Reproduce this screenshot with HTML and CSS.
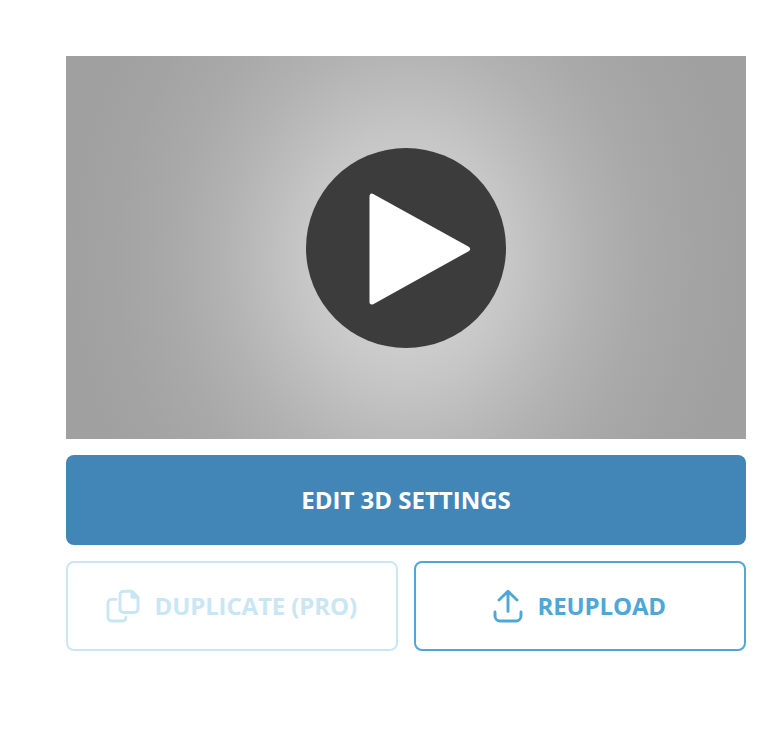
FILE: index.html
```html
<!DOCTYPE html>
<html lang="en">
<head>
<meta charset="utf-8">
<title>3D model</title>
<link rel="stylesheet" href="styles.css">
</head>
<body>
<main class="panel">
  <div class="preview">
    <button class="play" aria-label="Play">
      <svg width="200" height="200" viewBox="0 0 200 200"><path d="M66 48.200v105.800L161.500 101Z" fill="#fff" stroke="#fff" stroke-width="5" stroke-linejoin="round"/></svg>
    </button>
  </div>
  <button class="btn primary"><span>EDIT 3D SETTINGS</span></button>
  <div class="row">
    <button class="btn outline disabled" disabled>
      <svg class="icon" width="34" height="34" viewBox="0 0 34 34"><path d="M17.500 2.300h8.500l6 6v11.700a3.500 3.500 0 0 1-3.500 3.500H17.500a3.500 3.500 0 0 1-3.500-3.500V5.800a3.500 3.500 0 0 1 3.500-3.500Z"/><path d="M10 10.400H5.500a3.500 3.500 0 0 0-3.500 3.500v14.600a3.500 3.500 0 0 0 3.500 3.500h11a3.500 3.500 0 0 0 3.500-3.500"/><path class="fold" d="M26 2.800v5.500h5.500Z"/></svg>
      <span>DUPLICATE (PRO)</span>
    </button>
    <button class="btn outline">
      <svg class="icon" width="30" height="34" viewBox="0 0 30 34"><path d="M15 22.400V3M6 11l9-8.700 9 8.700M2 23v4a5 5 0 0 0 5 5h16a5 5 0 0 0 5-5v-4"/></svg>
      <span>REUPLOAD</span>
    </button>
  </div>
</main>
</body>
</html>
```
FILE: styles.css
```css
* { box-sizing: border-box; }
body { margin: 0; background: #fff; font-family: "Open Sans", sans-serif; }
.panel { width: 680px; margin: 56px 0 0 66px; display: flex; flex-direction: column; gap: 16px; }
.preview {
  height: 383px; display: flex; justify-content: center; padding-top: 92px;
  background: radial-gradient(ellipse 340px 400px at 50% 53%, #d4d4d4 0%, #cbcbcb 24%, #c5c5c5 32%, #bcbcbc 42%, #b2b2b2 54%, #a9a9a9 69%, #a3a3a3 86%, #a0a0a0 100%);
}
.play { width: 200px; height: 200px; padding: 0; border: 0; border-radius: 50%; background: #3c3c3c; }
.play svg { display: block; }
.btn {
  height: 90px; padding: 0; border: 0; border-radius: 8px; display: flex; align-items: center; justify-content: center;
  font: 700 24px "Open Sans", sans-serif;
}
.btn span { padding-bottom: 2px; }
.primary { background: #4286b8; color: #fff; }
.row { display: grid; grid-template-columns: 1fr 1fr; gap: 16px; }
.outline { gap: 14.500px; padding-right: 1px; border: 2px solid #4ea7d6; background: #fff; color: #4ea7d6; letter-spacing: -0.12px; }
.disabled { border-color: #c9e6f3; color: #c9e6f3; }
.icon { flex: none; fill: none; stroke: currentColor; stroke-width: 2.9; stroke-linecap: round; stroke-linejoin: round; }
.icon .fold { fill: currentColor; }
```
